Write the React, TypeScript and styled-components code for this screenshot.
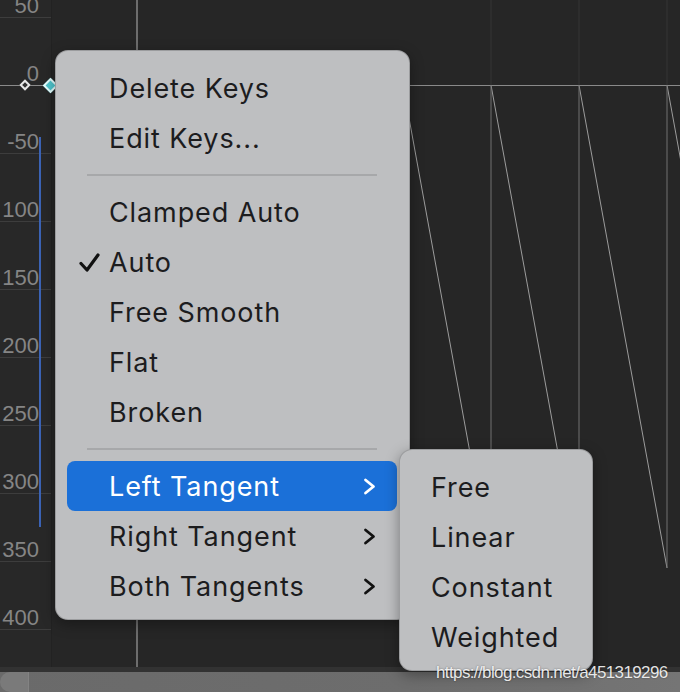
import React from "react";
import styled, { createGlobalStyle } from "styled-components";

const Global = createGlobalStyle`
  html, body { margin: 0; padding: 0; background: #262626; }
  * { box-sizing: border-box; }
`;

const Screen = styled.div`
  position: relative;
  width: 680px;
  height: 692px;
  overflow: hidden;
  display: flex;
  flex-direction: column;
  background: #262626;
  font-family: Inter, "Liberation Sans", sans-serif;
`;

const Graph = styled.div`
  position: relative;
  height: 667px;
  display: grid;
  grid-template-columns: 52px 1fr;
`;

const Axis = styled.div`
  position: relative;
  overflow: hidden;
  display: flex;
  flex-direction: column;
  background: #282828;
  border-right: 1px solid #222;
`;

const AxisRow = styled.div<{ $h: number; $zero?: boolean }>`
  flex: 0 0 ${(p) => p.$h}px;
  min-height: 0;
  overflow: hidden;
  display: flex;
  align-items: flex-end;
  justify-content: flex-end;
  padding-right: 12px;
  border-bottom: 1px solid ${(p) => (p.$zero ? "#8a8a8a" : "#3d3d3d")};
  color: #858585;
  font-family: "Liberation Sans", Arial, sans-serif;
  font-size: 22px;
  line-height: 1;
  white-space: nowrap;
`;

const RangeBar = styled.div`
  position: absolute;
  left: 39px;
  top: 137px;
  width: 2px;
  height: 390px;
  background: #3b63b5;
`;

const Plot = styled.svg`
  display: block;
  width: 628px;
  height: 667px;
`;

const Key = styled.div<{ $x: number; $size: number; $color: string; $fill: string }>`
  position: absolute;
  left: ${(p) => p.$x - p.$size / 2}px;
  top: ${(p) => 85 - p.$size / 2}px;
  width: ${(p) => p.$size}px;
  height: ${(p) => p.$size}px;
  transform: rotate(45deg);
  background: ${(p) => p.$fill};
  border: 2px solid ${(p) => p.$color};
`;

const ScrollBar = styled.div`
  height: 25px;
  border-top: 5px solid #323232;
  background: linear-gradient(90deg, #6a6a6a 0%, #6d6d6d 60%, #757575 100%);
  display: flex;
`;

const Thumb = styled.div`
  width: 29px;
  height: 100%;
  background: #7a7a7a;
  border-radius: 12px 0 0 12px;
  border-right: 1px solid #838383;
`;

const Menu = styled.div<{ $left: number; $top: number; $width: number }>`
  position: absolute;
  left: ${(p) => p.$left}px;
  top: ${(p) => p.$top}px;
  width: ${(p) => p.$width}px;
  padding: 12px 12px 8px 11px;
  background: #bebfc1;
  border-radius: 13px;
  border: 1px solid rgba(0, 0, 0, 0.18);
  box-shadow: 0 4px 14px rgba(0, 0, 0, 0.35);
  display: flex;
  flex-direction: column;
`;

const Item = styled.div<{ $active?: boolean; $pad?: number }>`
  height: 50px;
  display: grid;
  grid-template-columns: ${(p) => p.$pad ?? 42}px 1fr auto;
  align-items: center;
  padding-right: 21px;
  border-radius: 8px;
  background: ${(p) => (p.$active ? "#1b70d8" : "transparent")};
  color: ${(p) => (p.$active ? "#ffffff" : "#1c1c1e")};
  font-size: 27px;
  letter-spacing: 0.9px;
  white-space: nowrap;
`;

const Slot = styled.span`
  display: flex;
  justify-content: center;
  align-items: center;
  padding-left: 2px;
`;

const Separator = styled.div`
  height: 24px;
  display: flex;
  align-items: center;
  padding: 0 20px;
  &::after {
    content: "";
    flex: 1;
    height: 2px;
    background: #a7a8aa;
  }
`;

const Watermark = styled.div`
  position: absolute;
  left: 436px;
  top: 663px;
  font-family: "Liberation Sans", Arial, sans-serif;
  font-size: 17px;
  letter-spacing: -0.62px;
  color: rgba(255, 255, 255, 0.88);
  text-shadow: 0 0 2px rgba(0, 0, 0, 0.45);
  white-space: nowrap;
`;

const Check = () => (
  <svg width="21" height="21" viewBox="0 0 21 21">
    <path d="M2 11.5 L8 18 L19 3" fill="none" stroke="#111" strokeWidth="3.2" strokeLinecap="round" strokeLinejoin="round" />
  </svg>
);

const Chevron = ({ color }: { color: string }) => (
  <svg width="13" height="17" viewBox="0 0 13 17">
    <path d="M2.5 2 L10.5 8.5 L2.5 15" fill="none" stroke={color} strokeWidth="2.8" strokeLinecap="round" strokeLinejoin="round" />
  </svg>
);

const axisRows: { label: string; h: number; zero?: boolean }[] = [
  { label: "50", h: 18 },
  { label: "0", h: 68, zero: true },
  { label: "-50", h: 68 },
  { label: "100", h: 68 },
  { label: "150", h: 68 },
  { label: "200", h: 68 },
  { label: "250", h: 68 },
  { label: "300", h: 68 },
  { label: "350", h: 68 },
  { label: "400", h: 68 },
];

type Entry =
  | { kind: "item"; label: string; checked?: boolean; sub?: boolean; active?: boolean }
  | { kind: "sep" };

const mainMenu: Entry[] = [
  { kind: "item", label: "Delete Keys" },
  { kind: "item", label: "Edit Keys..." },
  { kind: "sep" },
  { kind: "item", label: "Clamped Auto" },
  { kind: "item", label: "Auto", checked: true },
  { kind: "item", label: "Free Smooth" },
  { kind: "item", label: "Flat" },
  { kind: "item", label: "Broken" },
  { kind: "sep" },
  { kind: "item", label: "Left Tangent", sub: true, active: true },
  { kind: "item", label: "Right Tangent", sub: true },
  { kind: "item", label: "Both Tangents", sub: true },
];

const subMenu = ["Free", "Linear", "Constant", "Weighted"];

// plot coordinates are relative to x = 52
const teeth = [351, 439, 527, 615];
const bottom = 568;

export default function App() {
  return (
    <>
      <Global />
      <Screen>
        <Graph>
          <Axis>
            {axisRows.map((r) => (
              <AxisRow key={r.label} $h={r.h} $zero={r.zero}>
                {r.label}
              </AxisRow>
            ))}
            <RangeBar />
          </Axis>
          <Plot viewBox="0 0 628 667">
            {teeth.slice(1).map((x) => (
              <line key={"f" + x} x1={x} y1={0} x2={x} y2={85} stroke="#353535" strokeWidth="1" />
            ))}
            <line x1={85} y1={0} x2={85} y2={667} stroke="#b4b4b4" strokeWidth="1" />
            <line x1={0} y1={85.5} x2={628} y2={85.5} stroke="#8a8a8a" strokeWidth="1" />
            {teeth.map((x) => (
              <line key={"d" + x} x1={x} y1={85} x2={x + 88} y2={bottom} stroke="#9c9c9c" strokeWidth="1" />
            ))}
            {teeth.slice(1).map((x) => (
              <line key={"v" + x} x1={x} y1={85} x2={x} y2={bottom} stroke="#707070" strokeWidth="1" />
            ))}
          </Plot>
          <Key $x={25} $size={8} $color="#e8e8e8" $fill="#333" />
          <Key $x={50} $size={11} $color="#e8ffff" $fill="#4fc7cf" />
        </Graph>
        <ScrollBar>
          <Thumb />
        </ScrollBar>

        <Menu $left={55} $top={50} $width={355}>
          {mainMenu.map((e, i) =>
            e.kind === "sep" ? (
              <Separator key={i} />
            ) : (
              <Item key={i} $active={e.active}>
                <Slot>{e.checked ? <Check /> : null}</Slot>
                <span>{e.label}</span>
                {e.sub ? <Chevron color={e.active ? "#ffffff" : "#111"} /> : <span />}
              </Item>
            )
          )}
        </Menu>

        <Menu $left={399} $top={449} $width={194}>
          {subMenu.map((s) => (
            <Item key={s} $pad={20}>
              <span />
              <span>{s}</span>
              <span />
            </Item>
          ))}
        </Menu>

        <Watermark>https://blog.csdn.net/a451319296</Watermark>
      </Screen>
    </>
  );
}
